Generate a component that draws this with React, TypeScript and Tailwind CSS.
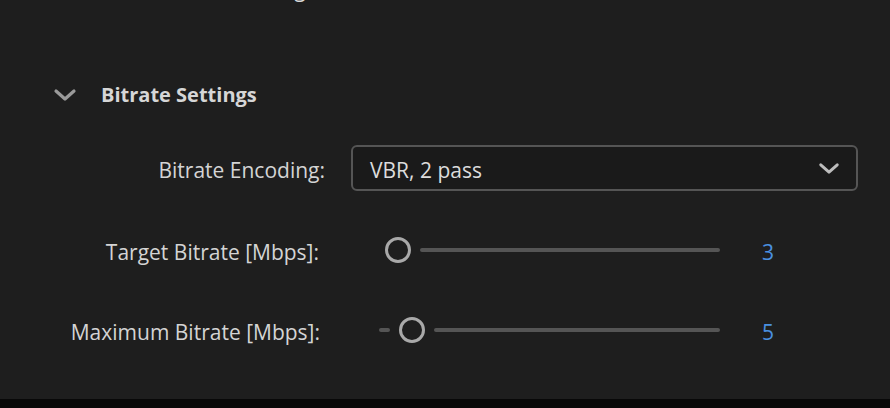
import React from "react";

const FONT = { fontFamily: '"Open Sans", "Noto Sans", sans-serif' };

function Chevron({ className }: { className?: string }) {
  return (
    <svg viewBox="0 0 24 14" className={className} fill="none">
      <path d="M3 3 L12 11 L21 3" stroke="currentColor" strokeWidth="3.2" strokeLinecap="round" strokeLinejoin="round" />
    </svg>
  );
}

function Slider({ lead, value }: { lead: number; value: string }) {
  return (
    <div className="flex items-center h-[30px]">
      <div className="flex items-center w-[341px]">
        {lead > 0 && <div className="h-[4px] rounded-full bg-[#555555]" style={{ width: lead }} />}
        <div
          className="h-[26px] w-[26px] shrink-0 rounded-full border-[3px] border-[#a9a9a9] bg-[#1e1e1e]"
          style={{ marginLeft: lead > 0 ? 9 : 6 }}
        />
        <div className="ml-[9px] h-[4px] flex-1 rounded-full bg-[#555555]" />
      </div>
      <div className="ml-[42px] pt-[6px] text-[21px] text-[#4a90e0]">{value}</div>
    </div>
  );
}

export default function App() {
  return (
    <div className="relative h-[408px] w-[890px] overflow-hidden bg-[#1e1e1e] text-[#d4d4d4]" style={FONT}>
      {/* cut-off row from above */}
      <div className="flex items-center -mt-[24px] h-[28px]">
        <div className="w-[323px] text-right text-[21px] text-[#d8d8d8]">Average:</div>
        <div className="ml-[30px] text-[21px] text-[#7a7a7a]">256 cd/m 2</div>
      </div>

      {/* section header */}
      <div className="mt-[76px] flex items-center h-[30px]">
        <Chevron className="ml-[53px] h-[14px] w-[24px] text-[#9a9a9a]" />
        <div className="ml-[24px] text-[20px] font-bold text-[#d6d6d6]">Bitrate Settings</div>
      </div>

      {/* encoding dropdown */}
      <div className="mt-[35px] flex items-center h-[46px]">
        <div className="w-[325px] pt-[6px] text-right text-[21px]">Bitrate Encoding:</div>
        <div className="ml-[26px] flex h-[46px] w-[507px] items-center justify-between rounded-[6px] border-2 border-[#555555] bg-[#1a1a1a] pl-[17px] pr-[16px]">
          <span className="pt-[5px] text-[21px] text-[#dcdcdc]">VBR, 2 pass</span>
          <Chevron className="h-[13px] w-[22px] text-[#bdbdbd]" />
        </div>
      </div>

      {/* target bitrate */}
      <div className="mt-[44px] flex items-center h-[30px]">
        <div className="w-[319px] pt-[6px] text-right text-[21px]">Target Bitrate [Mbps]:</div>
        <div className="ml-[60px]">
          <Slider lead={0} value="3" />
        </div>
      </div>

      {/* maximum bitrate */}
      <div className="mt-[50px] flex items-center h-[30px]">
        <div className="w-[320px] pt-[6px] text-right text-[21px]">Maximum Bitrate [Mbps]:</div>
        <div className="ml-[59px]">
          <Slider lead={11} value="5" />
        </div>
      </div>

      <div className="absolute bottom-0 left-0 h-[9px] w-full bg-[#080808]" />
    </div>
  );
}
